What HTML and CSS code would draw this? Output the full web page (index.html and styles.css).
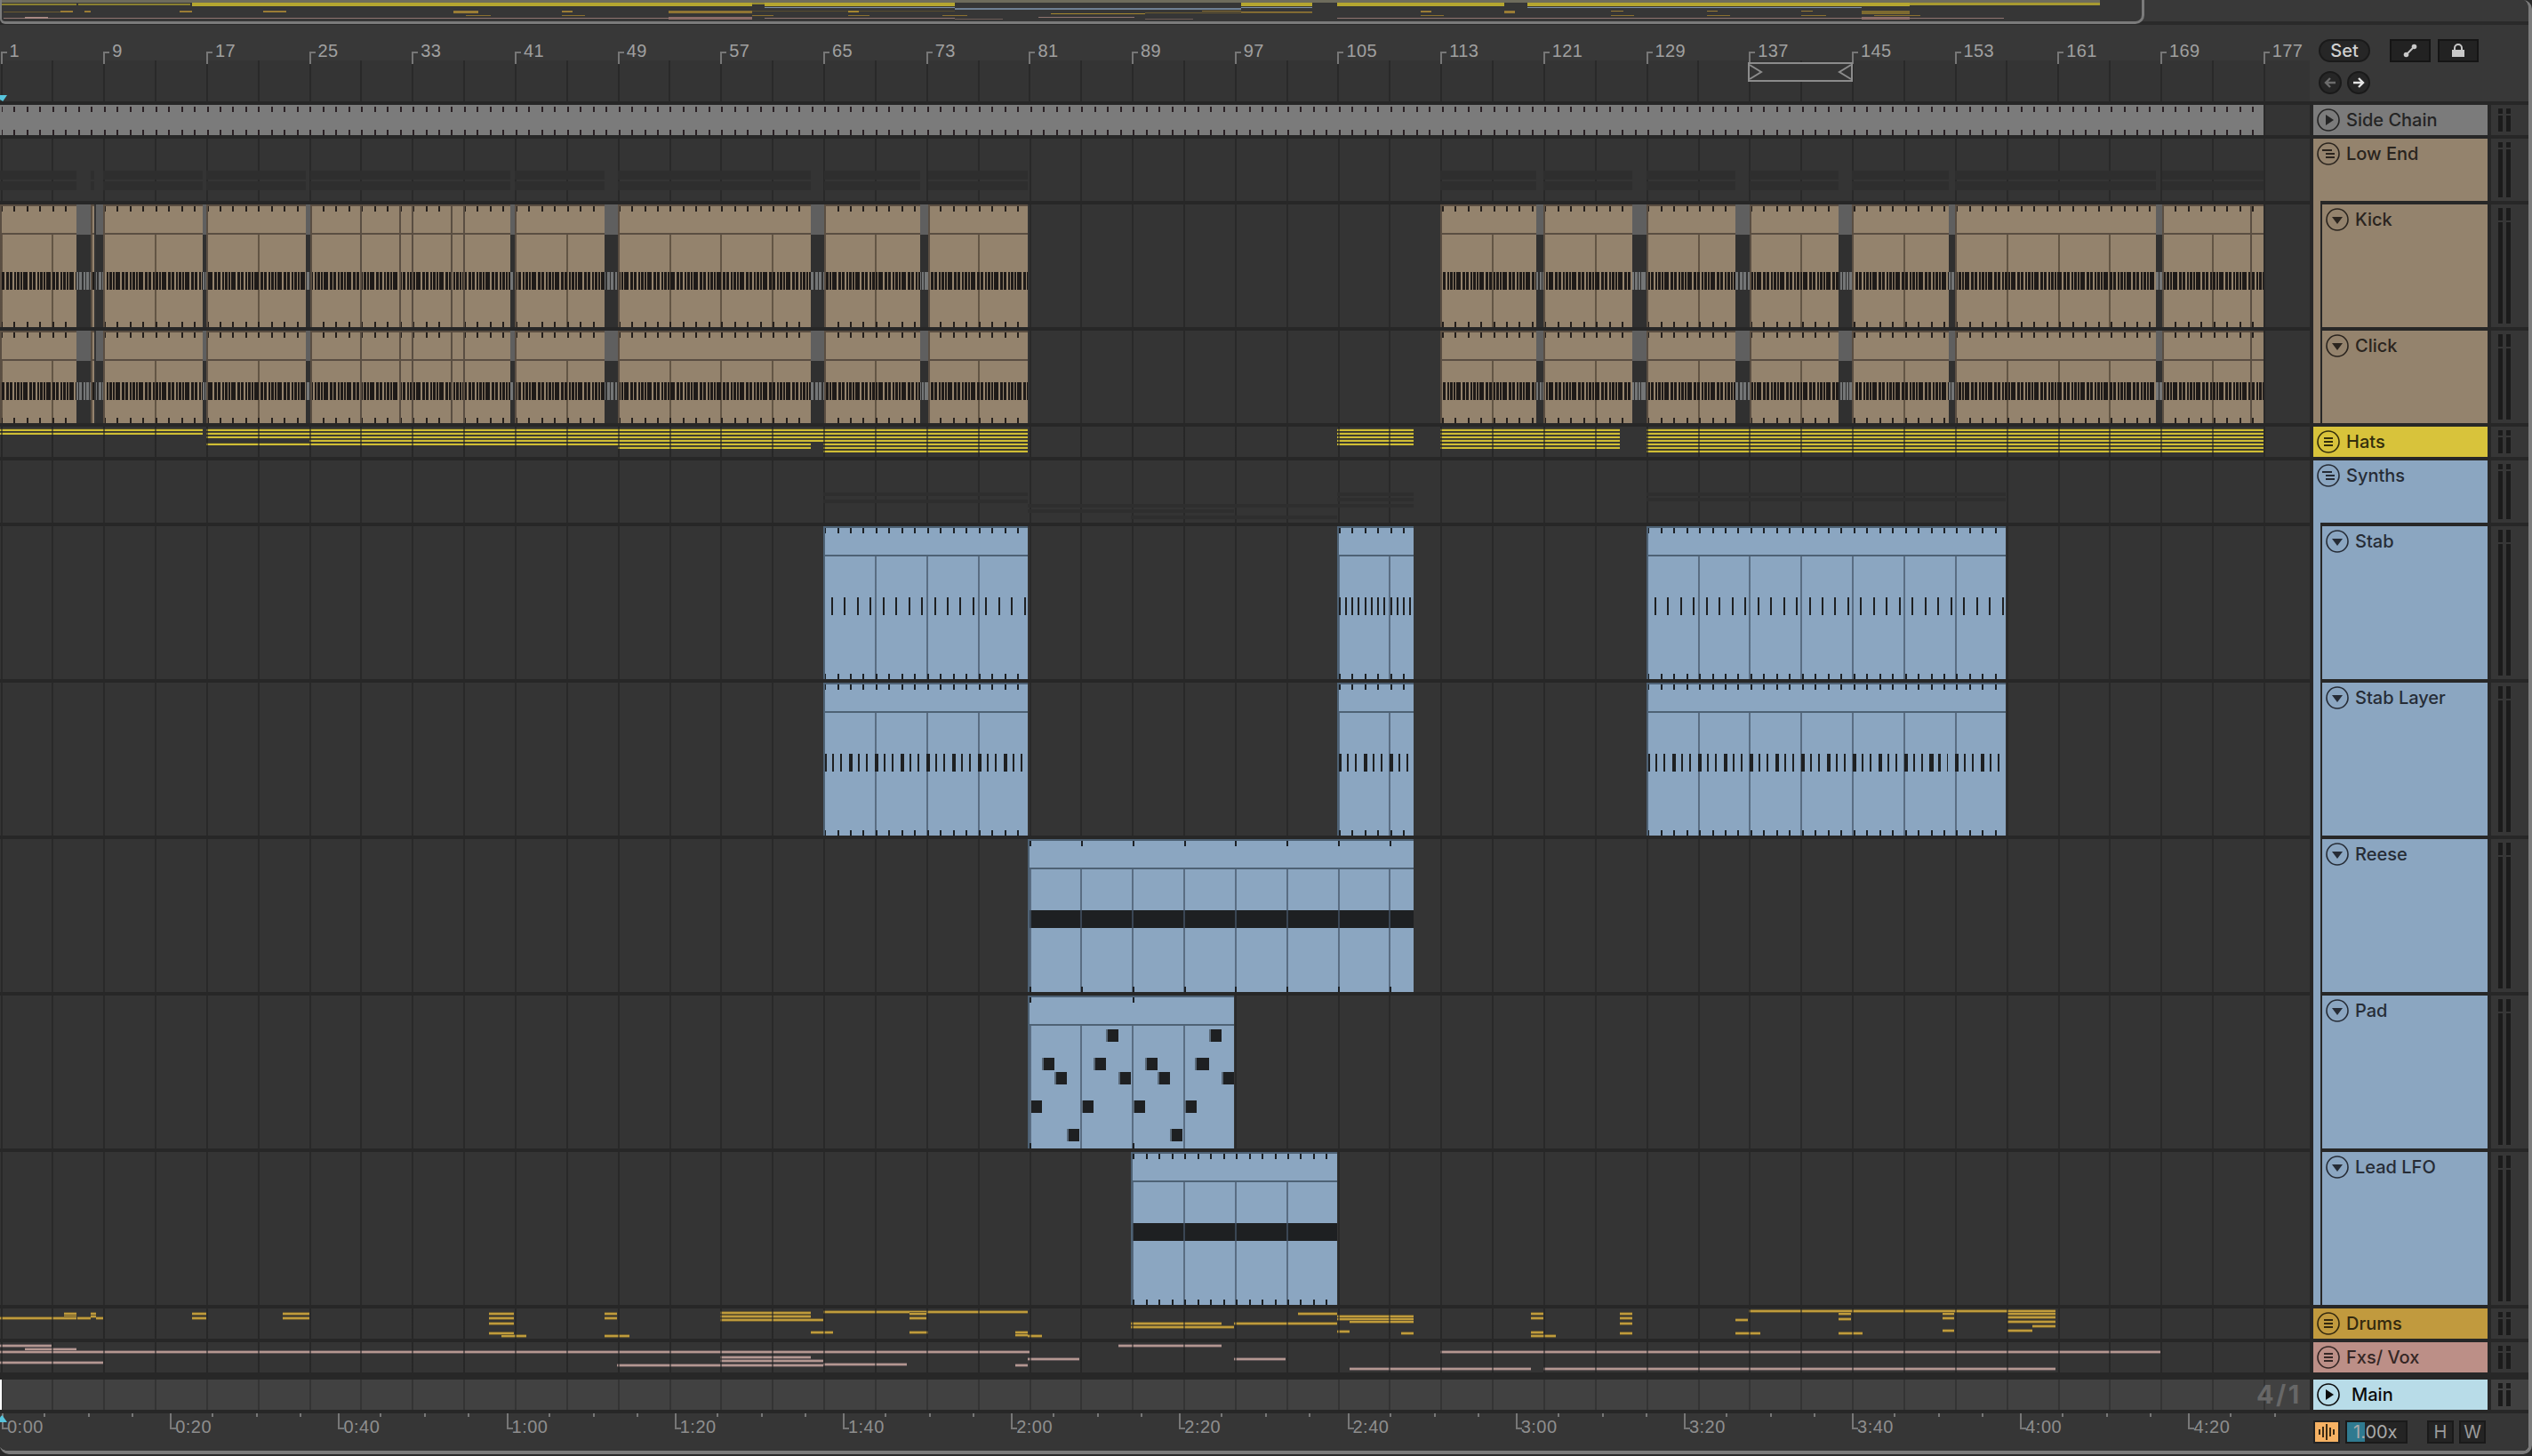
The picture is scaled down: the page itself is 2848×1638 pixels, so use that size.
FILE: index.html
```html
<!DOCTYPE html>
<html lang="en">
<head>
  <meta charset="UTF-8">
  <meta name="viewport" content="width=device-width, initial-scale=1.0">
  <title>Arrangement</title>
  <link rel="stylesheet" href="styles.css">
</head>
<body>
  <svg class="defs" width="0" height="0">
    <symbol id="i-play" viewBox="0 0 26 26"><circle cx="13" cy="13" r="12" fill="none" stroke="currentColor" stroke-width="1.6"/><path d="M10 7v12l9-6z" fill="currentColor"/></symbol>
    <symbol id="i-open" viewBox="0 0 26 26"><circle cx="13" cy="13" r="12" fill="none" stroke="currentColor" stroke-width="1.6"/><path d="M7 10h12l-6 8z" fill="currentColor"/></symbol>
    <symbol id="i-group" viewBox="0 0 26 26"><circle cx="13" cy="13" r="12" fill="none" stroke="currentColor" stroke-width="1.6"/><path d="M8 8h10v2H8zM8 12h10v2H8zM8 16h10v2H8z" fill="currentColor"/></symbol>
    <symbol id="i-fold" viewBox="0 0 26 26"><circle cx="13" cy="13" r="12" fill="none" stroke="currentColor" stroke-width="1.6"/><path d="M6 8h11v2H6zM10 12h10v2H10zM10 16h10v2H10z" fill="currentColor"/></symbol>
  </svg>

  <div class="app">
    <div class="overview"><div class="overview-frame" id="overview"></div></div>

    <div class="stack">
      <div class="top-row">
        <div class="ruler">
          <div class="bar">1</div><div class="bar">9</div><div class="bar">17</div><div class="bar">25</div>
          <div class="bar">33</div><div class="bar">41</div><div class="bar">49</div><div class="bar">57</div>
          <div class="bar">65</div><div class="bar">73</div><div class="bar">81</div><div class="bar">89</div>
          <div class="bar">97</div><div class="bar">105</div><div class="bar">113</div><div class="bar">121</div>
          <div class="bar">129</div><div class="bar">137</div><div class="bar">145</div><div class="bar">153</div>
          <div class="bar">161</div><div class="bar">169</div><div class="bar">177</div>
          <svg class="loop-brace" width="118" height="22" viewBox="0 0 118 22">
            <rect x="1" y="1" width="116" height="20" fill="#343434" stroke="#8c8c8c" stroke-width="2"/>
            <path d="M2 3l13 8-13 8M116 3l-13 8 13 8" fill="none" stroke="#8c8c8c" stroke-width="2"/>
          </svg>
          <div class="insert-marker"></div>
        </div>
        <div class="controls">
          <div class="control-row">
            <div class="set-btn">Set</div>
            <div class="square-btn">
              <svg width="16" height="16" viewBox="0 0 16 16"><path d="M4 12L12 4" stroke="#c8c8c8" stroke-width="2"/><circle cx="3.5" cy="12.5" r="2.8" fill="#c8c8c8"/><circle cx="12.5" cy="3.5" r="2.8" fill="#c8c8c8"/></svg>
            </div>
            <div class="square-btn">
              <svg width="16" height="16" viewBox="0 0 16 16"><path d="M4 7V5a4 4 0 018 0v2" fill="none" stroke="#c8c8c8" stroke-width="2"/><rect x="1" y="7" width="14" height="8" fill="#c8c8c8"/></svg>
            </div>
          </div>
          <div class="control-row nav-row">
            <div class="round-btn">
              <svg width="16" height="16" viewBox="0 0 16 16"><path d="M14 8H4M8 3L3 8l5 5" fill="none" stroke="#6c6c6c" stroke-width="2.4"/></svg>
            </div>
            <div class="round-btn">
              <svg width="16" height="16" viewBox="0 0 16 16"><path d="M2 8h10M8 3l5 5-5 5" fill="none" stroke="#e4e4e4" stroke-width="2.4"/></svg>
            </div>
          </div>
        </div>
      </div>

      <div class="track h34">
        <div class="lane" id="side-chain"></div>
        <div class="header grey"><svg class="ico"><use href="#i-play"/></svg><span>Side Chain</span></div>
        <div class="meter"><i></i><i></i></div>
      </div>
      <div class="track h70">
        <div class="lane" id="low-end"></div>
        <div class="header tan"><svg class="ico"><use href="#i-fold"/></svg><span>Low End</span></div>
        <div class="meter"><i></i><i></i></div>
      </div>
      <div class="track h138">
        <div class="lane" id="kick"></div>
        <div class="header tan child"><svg class="ico"><use href="#i-open"/></svg><span>Kick</span></div>
        <div class="meter tall"><i></i><i></i></div>
      </div>
      <div class="track h104">
        <div class="lane" id="click"></div>
        <div class="header tan child"><svg class="ico"><use href="#i-open"/></svg><span>Click</span></div>
        <div class="meter tall"><i></i><i></i></div>
      </div>
      <div class="track h34">
        <div class="lane midi-lane" id="hats"></div>
        <div class="header yellow"><svg class="ico"><use href="#i-group"/></svg><span>Hats</span></div>
        <div class="meter"><i></i><i></i></div>
      </div>
      <div class="track h70">
        <div class="lane" id="synths"></div>
        <div class="header blue"><svg class="ico"><use href="#i-fold"/></svg><span>Synths</span></div>
        <div class="meter"><i></i><i></i></div>
      </div>
      <div class="track h172">
        <div class="lane" id="stab"></div>
        <div class="header blue child"><svg class="ico"><use href="#i-open"/></svg><span>Stab</span></div>
        <div class="meter tall"><i></i><i></i></div>
      </div>
      <div class="track h172">
        <div class="lane" id="stab-layer"></div>
        <div class="header blue child"><svg class="ico"><use href="#i-open"/></svg><span>Stab Layer</span></div>
        <div class="meter tall"><i></i><i></i></div>
      </div>
      <div class="track h172">
        <div class="lane" id="reese"></div>
        <div class="header blue child"><svg class="ico"><use href="#i-open"/></svg><span>Reese</span></div>
        <div class="meter tall"><i></i><i></i></div>
      </div>
      <div class="track h172">
        <div class="lane" id="pad"></div>
        <div class="header blue child"><svg class="ico"><use href="#i-open"/></svg><span>Pad</span></div>
        <div class="meter tall"><i></i><i></i></div>
      </div>
      <div class="track h172">
        <div class="lane" id="lead-lfo"></div>
        <div class="header blue child"><svg class="ico"><use href="#i-open"/></svg><span>Lead LFO</span></div>
        <div class="meter tall"><i></i><i></i></div>
      </div>
      <div class="track h34">
        <div class="lane midi-lane" id="drums"></div>
        <div class="header gold"><svg class="ico"><use href="#i-group"/></svg><span>Drums</span></div>
        <div class="meter"><i></i><i></i></div>
      </div>
      <div class="track h34">
        <div class="lane midi-lane" id="fxs"></div>
        <div class="header pink"><svg class="ico"><use href="#i-group"/></svg><span>Fxs/ Vox</span></div>
        <div class="meter"><i></i><i></i></div>
      </div>
      <div class="track h34 main-track">
        <div class="lane main-lane"><div class="quant">4/1</div></div>
        <div class="header sky"><svg class="ico"><use href="#i-play"/></svg><span>Main</span></div>
        <div class="meter main-meter"><i></i><i></i></div>
      </div>

      <div class="timeline">
        <div class="time-ruler">
          <div class="time">0:00</div><div class="time">0:20</div><div class="time">0:40</div><div class="time">1:00</div>
          <div class="time">1:20</div><div class="time">1:40</div><div class="time">2:00</div><div class="time">2:20</div>
          <div class="time">2:40</div><div class="time">3:00</div><div class="time">3:20</div><div class="time">3:40</div>
          <div class="time">4:00</div><div class="time">4:20</div>
          <div class="start-marker"></div>
        </div>
        <div class="bottom-controls">
          <div class="wave-btn">
            <svg width="20" height="20" viewBox="0 0 20 20"><path d="M2 7v6M6 4v12M10 1v18M14 5v10M18 7v6" stroke="#3a2a14" stroke-width="2"/></svg>
          </div>
          <div class="zoom-field"><span class="zoom-fill"></span><span class="zoom-text">1.00x</span></div>
          <div class="key-btn first">H</div>
          <div class="key-btn">W</div>
        </div>
      </div>
    </div>
  </div>

  <script src="script.js"></script>
</body>
</html>
```

FILE: styles.css
```css
* {
  box-sizing: border-box;
}
html, body {
  margin: 0;
  background-color: #2a2a2a;
}
body {
  width: 2848px;
  height: 1638px;
  overflow: hidden;
  font-family: 'Inter', 'Liberation Sans', sans-serif;
}
.defs {
  display: block;
  height: 0;
}
.app {
  width: 2848px;
  height: 1636px;
  background-color: #363636;
  border-right: 4px solid #7b7b7b;
  border-bottom: 4px solid #7b7b7b;
  border-radius: 0 10px 10px 10px;
  overflow: hidden;
}

/* overview strip */
.overview {
  height: 28px;
  background: linear-gradient(#393939 0 24px, #2a2a2a 24px);
}
.overview-frame {
  position: relative;
  width: 2412px;
  height: 27px;
  background-color: #363636;
  border: 3px solid #7b7b7b;
  border-top: 0;
  border-left-width: 2px;
  border-radius: 0 0 10px 6px;
  overflow: hidden;
}
.ov {
  position: absolute;
}

/* main stack, the gaps are the dark separators */
.stack {
  display: flex;
  flex-direction: column;
  gap: 4px;
  background-color: #272727;
}
.top-row {
  display: flex;
  height: 86px;
  background-color: #383838;
}
.ruler {
  position: relative;
  display: flex;
  width: 2598px;
  padding-left: 0.5px;
  overflow: hidden;
  background: linear-gradient(#383838 0 40px, #343434 40px);
}
.bar {
  position: relative;
  flex: none;
  width: 115.7px;
  padding: 19px 0 0 10px;
  font: 20px/20px 'Liberation Sans', sans-serif;
  letter-spacing: 0.4px;
  color: #a0a0a0;
  background:
    linear-gradient(#292929, #292929) 0 42px / 2px 44px no-repeat,
    linear-gradient(#292929, #292929) 57.85px 40px / 2px 46px no-repeat;
}
.bar::before {
  content: "";
  position: absolute;
  left: 0;
  top: 30px;
  width: 5px;
  height: 12px;
  border-left: 2px solid #777;
  border-top: 2px solid #777;
}
.loop-brace {
  position: absolute;
  left: 1966px;
  top: 42px;
}
.insert-marker {
  position: absolute;
  left: 0;
  top: 79px;
  width: 8px;
  height: 7px;
  background-color: #57c4dc;
  clip-path: polygon(0 0, 100% 0, 40% 100%, 0 70%);
}
.controls {
  padding: 16px 0 0 10px;
}
.control-row {
  display: flex;
  align-items: center;
}
.nav-row {
  gap: 6px;
  margin-top: 10px;
}
.set-btn {
  width: 58px;
  height: 26px;
  margin-right: 22px;
  border: 2px solid #1a1a1a;
  border-radius: 13px;
  background-color: #262626;
  color: #d0d0d0;
  font-size: 20px;
  font-weight: 500;
  line-height: 22px;
  text-align: center;
}
.square-btn {
  display: flex;
  align-items: center;
  justify-content: center;
  width: 46px;
  height: 26px;
  margin-right: 8px;
  border: 2px solid #151515;
  background-color: #222;
}
.round-btn {
  display: flex;
  align-items: center;
  justify-content: center;
  width: 26px;
  height: 26px;
  border: 2px solid #1a1a1a;
  border-radius: 50%;
  background-color: #262626;
}

/* tracks */
.track {
  display: grid;
  grid-template-columns: 2598px 196px 42px;
  column-gap: 4px;
}
.h34 { height: 34px; }
.h70 { height: 70px; }
.h104 { height: 104px; }
.h138 { height: 138px; }
.h172 { height: 172px; }
.main-track {
  margin-top: 4px;
}
.lane {
  position: relative;
  overflow: hidden;
  background: repeating-linear-gradient(to right, transparent 0 0.5px, #292929 0.5px 2.5px, transparent 2.5px 57.85px), #343434;
}
.midi-lane::after {
  content: "";
  position: absolute;
  inset: 0;
  background: repeating-linear-gradient(to right, transparent 0 0.5px, rgba(38, 38, 38, 0.6) 0.5px 2.5px, transparent 2.5px 57.85px);
}
.main-lane {
  background: repeating-linear-gradient(to right, transparent 0 0.5px, #343434 0.5px 2.5px, transparent 2.5px 57.85px), #414141;
}
.main-lane::before {
  content: "";
  position: absolute;
  left: 0;
  top: 0;
  width: 2px;
  height: 100%;
  background-color: #fff;
}
.quant {
  position: absolute;
  left: 2538px;
  top: 3px;
  color: #676767;
  font-size: 29px;
  font-weight: 700;
  line-height: 28px;
  letter-spacing: 2.5px;
}

.header {
  position: relative;
  display: flex;
  align-items: flex-start;
  gap: 7px;
  padding: 4px 0 0 4px;
  font-size: 20px;
  font-weight: 500;
  line-height: 26px;
  color: var(--ink);
  background-color: var(--tone);
}
.ico {
  flex: none;
  width: 26px;
  height: 26px;
}
.grey { --tone: #7b7b7b; --ink: #242424; }
.tan { --tone: #94836d; --ink: #2a241e; }
.yellow { --tone: #d8c33b; --ink: #332e0c; }
.blue { --tone: #8ba6c1; --ink: #262c36; }
.gold { --tone: #c19a3e; --ink: #33290f; }
.pink { --tone: #bc8f87; --ink: #352725; }
.sky { --tone: #b8dce8; --ink: #0c0c0c; }
.sky span {
  margin-left: 6px;
}
.child {
  padding-left: 14px;
  background: linear-gradient(to right, var(--tone) 0 8px, #272727 8px 10px, var(--tone) 10px);
}
.child::before {
  content: "";
  position: absolute;
  left: 0;
  top: -4px;
  width: 8px;
  height: 4px;
  background-color: var(--tone);
}
.meter {
  --cap: 6px;
  display: flex;
  gap: 4px;
  padding: 4px 0 4px 8px;
  background-color: #363636;
}
.meter i {
  width: 5px;
  background: linear-gradient(#1b1b1b 0 var(--cap), transparent var(--cap) calc(var(--cap) + 2px), #1b1b1b calc(var(--cap) + 2px));
}
.meter.tall {
  --cap: 14px;
}
.main-meter {
  background-color: #404040;
}

/* clips */
.clip {
  position: absolute;
  top: 0;
  height: 100%;
  overflow: hidden;
  border-left: 2px solid var(--edge);
  border-top: 2px solid var(--edge);
  background-color: var(--fill);
}
.clip.tan-clip { --fill: #94836d; --edge: #5a4e42; --line: rgba(50, 40, 28, 0.5); --tick-ink: #241f1c; }
.clip.blue-clip { --fill: #8ba6c1; --edge: #4e6275; --line: rgba(40, 52, 68, 0.5); --tick-ink: #1c2024; }
.clip.grey-clip { --fill: #7b7b7b; --edge: #7b7b7b; --line: transparent; --tick-ink: #2a2024; }
.clip-inner {
  position: absolute;
  top: 0;
  width: 2598px;
  height: 100%;
}
.clip-title {
  height: 32px;
  border-bottom: 2px solid var(--edge);
}
.grey-clip .clip-title {
  border-bottom: 0;
}
.clip-grid {
  position: absolute;
  top: 32px;
  bottom: 0;
  left: 0;
  right: 0;
  background: repeating-linear-gradient(to right, transparent 0 0.5px, var(--line) 0.5px 2.5px, transparent 2.5px 57.85px);
}
.clip-ticks {
  --step: 14.47px;
  --tick: repeating-linear-gradient(to right, transparent 0 1px, var(--tick-ink) 1px 3px, transparent 3px var(--step));
  position: absolute;
  inset: 0;
  background:
    var(--tick) 0 0 / 100% 6px no-repeat,
    var(--tick) 0 100% / 100% 6px no-repeat;
}
.step-4 { --step: 57.85px; }
.step-8 { --step: 115.7px; }
.clip-notes {
  position: absolute;
  left: 0;
  right: 0;
  height: 20px;
}
.notes-dense {
  background: repeating-linear-gradient(to right,
    #1e1a18 0 5px, transparent 5px 7px, #1e1a18 7px 10px, transparent 10px 11px,
    #1e1a18 11px 14px, transparent 14px 16px, #1e1a18 16px 18px, transparent 18px 19px,
    #1e1a18 19px 22px, transparent 22px 23px, #1e1a18 23px 25px, transparent 25px 26px);
}
.notes-stab {
  background: repeating-linear-gradient(to right, transparent 0 8.7px, #1e2022 8.7px 10.7px, transparent 10.7px 14.47px);
}
.notes-stab-tight {
  background: repeating-linear-gradient(to right, transparent 0 1px, #1e2022 1px 3px, transparent 3px 8px, #1e2022 8px 10px, transparent 10px 14.47px);
}
.notes-layer {
  background: repeating-linear-gradient(to right,
    #1e2022 0 4px, transparent 4px 10px, #1e2022 10px 12px, transparent 12px 19px,
    #1e2022 19px 21px, transparent 21px 28.94px);
}
.notes-solid {
  background: repeating-linear-gradient(to right, transparent 0 0.5px, #3a4654 0.5px 2.5px, transparent 2.5px 57.85px), #1e2022;
}
.pad-note {
  position: absolute;
  width: 14px;
  height: 14px;
  background-color: #1e2022;
  border-left: 2px solid #5a6a7a;
}
.pad-note.wide {
  width: 16px;
}

/* gaps between clips on the drum lanes */
.clip-gap {
  position: absolute;
  top: 0;
  height: 100%;
  overflow: hidden;
  background: linear-gradient(#5f5f5f 0 34px, #303030 34px);
}
.clip-gap .clip-notes {
  opacity: 0.9;
  filter: invert(1) brightness(0.55);
}

/* midi previews on the folded tracks */
.band {
  position: absolute;
  background-color: #2e2e2e;
}
.note {
  position: absolute;
  height: 2px;
  background-color: var(--bright);
  box-shadow: 0 -1px 0 var(--dim), 0 1px 0 var(--dim);
}
.hats-note {
  --bright: #d0be35;
  --dim: #4f4c2c;
  box-shadow: 0 -1px 0 var(--dim);
}
.drums-note { --bright: #bf9b3c; --dim: #6a5a2e; }
.fxs-note { --bright: #b49791; --dim: #65585a; }

/* time ruler */
.timeline {
  display: flex;
  height: 42px;
  background-color: #363636;
}
.time-ruler {
  position: relative;
  display: flex;
  width: 2602px;
  padding-left: 2px;
  overflow: hidden;
}
.time {
  position: relative;
  flex: none;
  width: 189.2px;
  padding: 5px 0 0 6px;
  font: 20px/20px 'Liberation Sans', sans-serif;
  letter-spacing: 0.5px;
  color: #8e8e8e;
  background: repeating-linear-gradient(to right, transparent 0 47.3px, #777 47.3px 49.3px) 0 0 / 100% 4px no-repeat;
}
.time::before {
  content: "";
  position: absolute;
  left: 0;
  top: 0;
  width: 5px;
  height: 16px;
  border-left: 2px solid #777;
  border-bottom: 2px solid #777;
}
.start-marker {
  position: absolute;
  left: 0;
  top: 2px;
  width: 8px;
  height: 8px;
  background-color: #57c4dc;
  clip-path: polygon(30% 0, 100% 100%, 0 100%, 0 30%);
}
.bottom-controls {
  display: flex;
  align-items: flex-start;
  padding-top: 8px;
}
.wave-btn {
  display: flex;
  align-items: center;
  justify-content: center;
  width: 30px;
  height: 26px;
  margin-right: 6px;
  border: 2px solid #222;
  background-color: #f5b163;
}
.zoom-field {
  position: relative;
  width: 70px;
  height: 26px;
  border: 2px solid #1a1a1a;
  background-color: #242424;
}
.zoom-fill {
  position: absolute;
  left: 0;
  top: 0;
  width: 20px;
  height: 100%;
  background-color: #2f7a90;
}
.zoom-text {
  position: absolute;
  left: 7px;
  top: 0;
  color: #aaa;
  font-size: 20px;
  line-height: 22px;
}
.key-btn {
  width: 30px;
  height: 26px;
  margin-left: 6px;
  border: 2px solid #1a1a1a;
  background-color: #242424;
  color: #9a9a9a;
  font-size: 20px;
  line-height: 22px;
  text-align: center;
}
.key-btn.first {
  margin-left: 22px;
}
```

FILE: script.js
```js
const lowClips = [[0, 86], [102, 106], [116, 228], [232, 344], [349, 405], [405, 449], [449, 463], [463, 507],
  [507, 521], [521, 574], [579, 680], [695, 912], [927, 1035], [1044, 1156], [1620, 1728], [1736, 1836],
  [1852, 1952], [1968, 2068], [2083, 2192], [2199, 2425], [2432, 2531], [2531, 2546]];
const lowGaps = [[86, 102], [108, 116], [228, 232], [344, 349], [574, 579], [680, 695], [912, 927], [1035, 1044],
  [1728, 1736], [1836, 1852], [1952, 1968], [2068, 2083], [2192, 2199], [2425, 2432]];
const stabClips = [[926, 1156], [1504, 1590], [1852, 2256]];

const hats = [[0, 228, [0, 1]], [232, 348, [0, 1, 2, 4]], [348, 695, [0, 1, 2, 3, 4]], [695, 912, [0, 1, 2, 3, 4, 5]],
  [912, 926, [0, 1, 2, 3]], [926, 1156, [0, 1, 2, 3, 4, 5, 6]], [1504, 1590, [0, 1, 2, 3, 4]],
  [1620, 1822, [0, 1, 2, 3, 4, 5]], [1852, 2546, [0, 1, 2, 3, 4, 5, 6]]];

const drums = [[0, 72, 1482], [72, 86, 1477], [72, 86, 1480], [72, 86, 1482], [87, 102, 1482], [102, 108, 1477],
  [102, 108, 1480], [108, 116, 1482], [216, 232, 1477], [216, 232, 1482], [318, 348, 1477], [318, 348, 1482],
  [550, 578, 1477], [550, 578, 1482], [550, 578, 1488], [550, 578, 1499], [564, 592, 1502],
  [680, 694, 1477], [680, 694, 1482], [680, 708, 1502], [810, 912, 1476], [810, 912, 1480], [810, 926, 1484],
  [912, 937, 1498], [926, 1156, 1475], [1023, 1042, 1477], [1023, 1042, 1482], [1023, 1044, 1498],
  [1142, 1156, 1498], [1142, 1156, 1501], [1156, 1172, 1502], [1272, 1374, 1488], [1272, 1388, 1492],
  [1388, 1504, 1488], [1460, 1504, 1477], [1504, 1590, 1480], [1504, 1590, 1483],
  [1518, 1590, 1486], [1504, 1518, 1497], [1576, 1590, 1499], [1722, 1736, 1477], [1722, 1736, 1482],
  [1722, 1736, 1498], [1722, 1750, 1502], [1822, 1836, 1477], [1822, 1836, 1482], [1822, 1836, 1488],
  [1822, 1836, 1499], [1952, 1966, 1484], [1952, 1980, 1499], [1967, 2312, 1474], [2068, 2082, 1477],
  [2068, 2082, 1483], [2068, 2095, 1499], [2185, 2198, 1477], [2185, 2198, 1482], [2185, 2198, 1496],
  [2258, 2312, 1477], [2258, 2312, 1481], [2258, 2312, 1486], [2258, 2286, 1496], [2286, 2312, 1491]];

const fxs = [[0, 58, 1513], [28, 86, 1517], [0, 1158, 1520], [0, 116, 1532], [694, 926, 1535], [810, 912, 1526],
  [810, 926, 1530], [926, 1020, 1534], [1156, 1214, 1528], [1142, 1156, 1535], [1258, 1374, 1513], [1388, 1446, 1528],
  [1518, 1722, 1539], [1736, 2312, 1539], [1620, 2430, 1520]];

// x, y of the chords in the Pad clip, 1344 is the one longer note
const padNotes = [[1244, 1158], [1360, 1158], [1172, 1190], [1230, 1190], [1288, 1190], [1344, 1190], [1186, 1206],
  [1258, 1206], [1302, 1206], [1374, 1206], [1158, 1238], [1216, 1238], [1274, 1238], [1332, 1238], [1200, 1270],
  [1316, 1270]];

// x0, x1, y, height, colour
const overview = [
  [0, 2360, 0, 3, '#6e6c5c'], [0, 84, 4, 2, '#8a8030'], [86, 212, 4, 2, '#8a8030'],
  [214, 844, 3, 4, '#b5a630'], [844, 858, 3, 2, '#9a8e30'], [858, 1072, 3, 4, '#b5a630'], [1394, 1474, 3, 4, '#b5a630'],
  [1502, 1690, 3, 4, '#b5a630'], [1716, 2146, 3, 4, '#b5a630'], [2146, 2360, 3, 3, '#a89a30'],
  [858, 1072, 8, 1, '#7d90a5'], [1072, 1394, 9, 2, '#6f8093'], [1394, 1474, 8, 1, '#7d90a5'], [1716, 2092, 8, 1, '#7d90a5'],
  [2, 66, 13, 1, '#6a5a30'], [66, 80, 12, 2, '#9a7c35'], [93, 100, 12, 2, '#9a7c35'], [200, 214, 12, 2, '#9a7c35'],
  [294, 320, 12, 2, '#9a7c35'], [508, 536, 12, 3, '#9a7c35'], [522, 550, 17, 1, '#8a7030'], [630, 642, 12, 2, '#9a7c35'],
  [630, 656, 17, 1, '#8a7030'], [750, 844, 12, 3, '#8f7433'], [844, 1072, 12, 1, '#574c2e'], [952, 964, 12, 2, '#a5862f'],
  [844, 868, 17, 1, '#8a7030'], [952, 976, 17, 1, '#8a7030'], [1058, 1086, 17, 1, '#8a7030'], [1180, 1286, 15, 1, '#a5862f'],
  [1286, 1474, 14, 1, '#6a5a30'], [1350, 1394, 12, 1, '#8a7030'], [1394, 1474, 13, 1, '#9a7c35'], [1596, 1608, 12, 2, '#9a7c35'],
  [1596, 1622, 17, 1, '#8a7030'], [1690, 1702, 12, 3, '#9a7c35'], [1810, 1824, 12, 1, '#9a7c35'], [1810, 1836, 17, 1, '#8a7030'],
  [1918, 1930, 12, 1, '#9a7c35'], [1918, 1944, 17, 1, '#8a7030'], [2024, 2037, 12, 1, '#9a7c35'], [2024, 2052, 17, 1, '#8a7030'],
  [2092, 2146, 12, 4, '#7d6a30'], [2106, 2158, 17, 1, '#8a7030'],
  [2, 700, 20, 1, '#8f7470'], [26, 52, 19, 2, '#a98a85'], [700, 844, 20, 1, '#8f7470'], [750, 844, 19, 3, '#8c6c68'],
  [858, 1072, 20, 1, '#8f7470'], [1072, 1126, 21, 1, '#6e5c58'], [1166, 1274, 19, 1, '#8f7470'], [1286, 1340, 21, 1, '#6e5c58'],
  [1502, 2252, 20, 1, '#8f7470'], [2092, 2146, 19, 3, '#8c6c68']
];

function el(cls, parent) {
  const d = document.createElement('div');
  d.className = cls;
  parent.appendChild(d);
  return d;
}

function place(d, x0, x1) {
  d.style.left = x0 + 'px';
  d.style.width = (x1 - x0) + 'px';
}

function addClip(lane, x0, x1, o) {
  const clip = el('clip ' + o.kind, lane);
  place(clip, x0, x1);
  const inner = el('clip-inner', clip);
  inner.style.left = -(x0 + 2) + 'px';
  el('clip-title', inner);
  el('clip-grid', inner);
  el('clip-ticks ' + (o.step || ''), inner);
  if (o.notes) {
    const n = el('clip-notes ' + o.notes, inner);
    n.style.top = o.notesTop + 'px';
  }
  return inner;
}

function addGap(lane, x0, x1, o) {
  const gap = el('clip-gap', lane);
  place(gap, x0, x1);
  const inner = el('clip-inner', gap);
  inner.style.left = -x0 + 'px';
  const n = el('clip-notes ' + o.notes, inner);
  n.style.top = (o.notesTop + 2) + 'px';
}

function addNotes(lane, list, laneTop, cls) {
  list.forEach(([x0, x1, y]) => {
    const n = el('note ' + cls, lane);
    place(n, x0, x1);
    n.style.top = (y - laneTop) + 'px';
  });
}

const byId = id => document.getElementById(id);

// overview strip
overview.forEach(([x0, x1, y, h, colour]) => {
  const s = el('ov', byId('overview'));
  place(s, x0, x1);
  s.style.top = y + 'px';
  s.style.height = h + 'px';
  s.style.backgroundColor = colour;
});

addClip(byId('side-chain'), 0, 2546, { kind: 'grey-clip' });

lowClips.forEach(([x0, x1]) => {
  [36, 48].forEach(top => {
    const b = el('band', byId('low-end'));
    place(b, x0, x1);
    b.style.top = top + 'px';
    b.style.height = '10px';
  });
  addClip(byId('kick'), x0, x1, { kind: 'tan-clip', notes: 'notes-dense', notesTop: 74 });
  addClip(byId('click'), x0, x1, { kind: 'tan-clip', notes: 'notes-dense', notesTop: 56 });
});
lowGaps.forEach(([x0, x1]) => {
  addGap(byId('kick'), x0, x1, { notes: 'notes-dense', notesTop: 74 });
  addGap(byId('click'), x0, x1, { notes: 'notes-dense', notesTop: 56 });
});

hats.forEach(([x0, x1, rows]) => {
  addNotes(byId('hats'), rows.map(r => [x0, x1, 483 + r * 4]), 480, 'hats-note');
});

[[926, 1156, 554], [926, 1156, 562], [1156, 1590, 567], [1156, 1388, 573], [1272, 1504, 580],
  [1504, 1590, 554], [1504, 1590, 560], [1852, 2256, 554], [1852, 2256, 560]].forEach(([x0, x1, y]) => {
  const b = el('band', byId('synths'));
  place(b, x0, x1);
  b.style.top = (y - 518) + 'px';
  b.style.height = '4px';
});

stabClips.forEach(([x0, x1]) => {
  const stabNotes = x0 === 1504 ? 'notes-stab-tight' : 'notes-stab';
  addClip(byId('stab'), x0, x1, { kind: 'blue-clip', notes: stabNotes, notesTop: 78 });
  addClip(byId('stab-layer'), x0, x1, { kind: 'blue-clip', notes: 'notes-layer', notesTop: 78 });
});
addClip(byId('reese'), 1156, 1590, { kind: 'blue-clip', step: 'step-4', notes: 'notes-solid', notesTop: 78 });
addClip(byId('lead-lfo'), 1272, 1504, { kind: 'blue-clip', notes: 'notes-solid', notesTop: 78 });

const padInner = addClip(byId('pad'), 1156, 1388, { kind: 'blue-clip', step: 'step-8' });
padNotes.forEach(([x, y]) => {
  const n = el('pad-note' + (x === 1344 ? ' wide' : ''), padInner);
  n.style.left = x + 'px';
  n.style.top = (y - 1122) + 'px';
});

addNotes(byId('drums'), drums, 1472, 'drums-note');
addNotes(byId('fxs'), fxs, 1510, 'fxs-note');
```
